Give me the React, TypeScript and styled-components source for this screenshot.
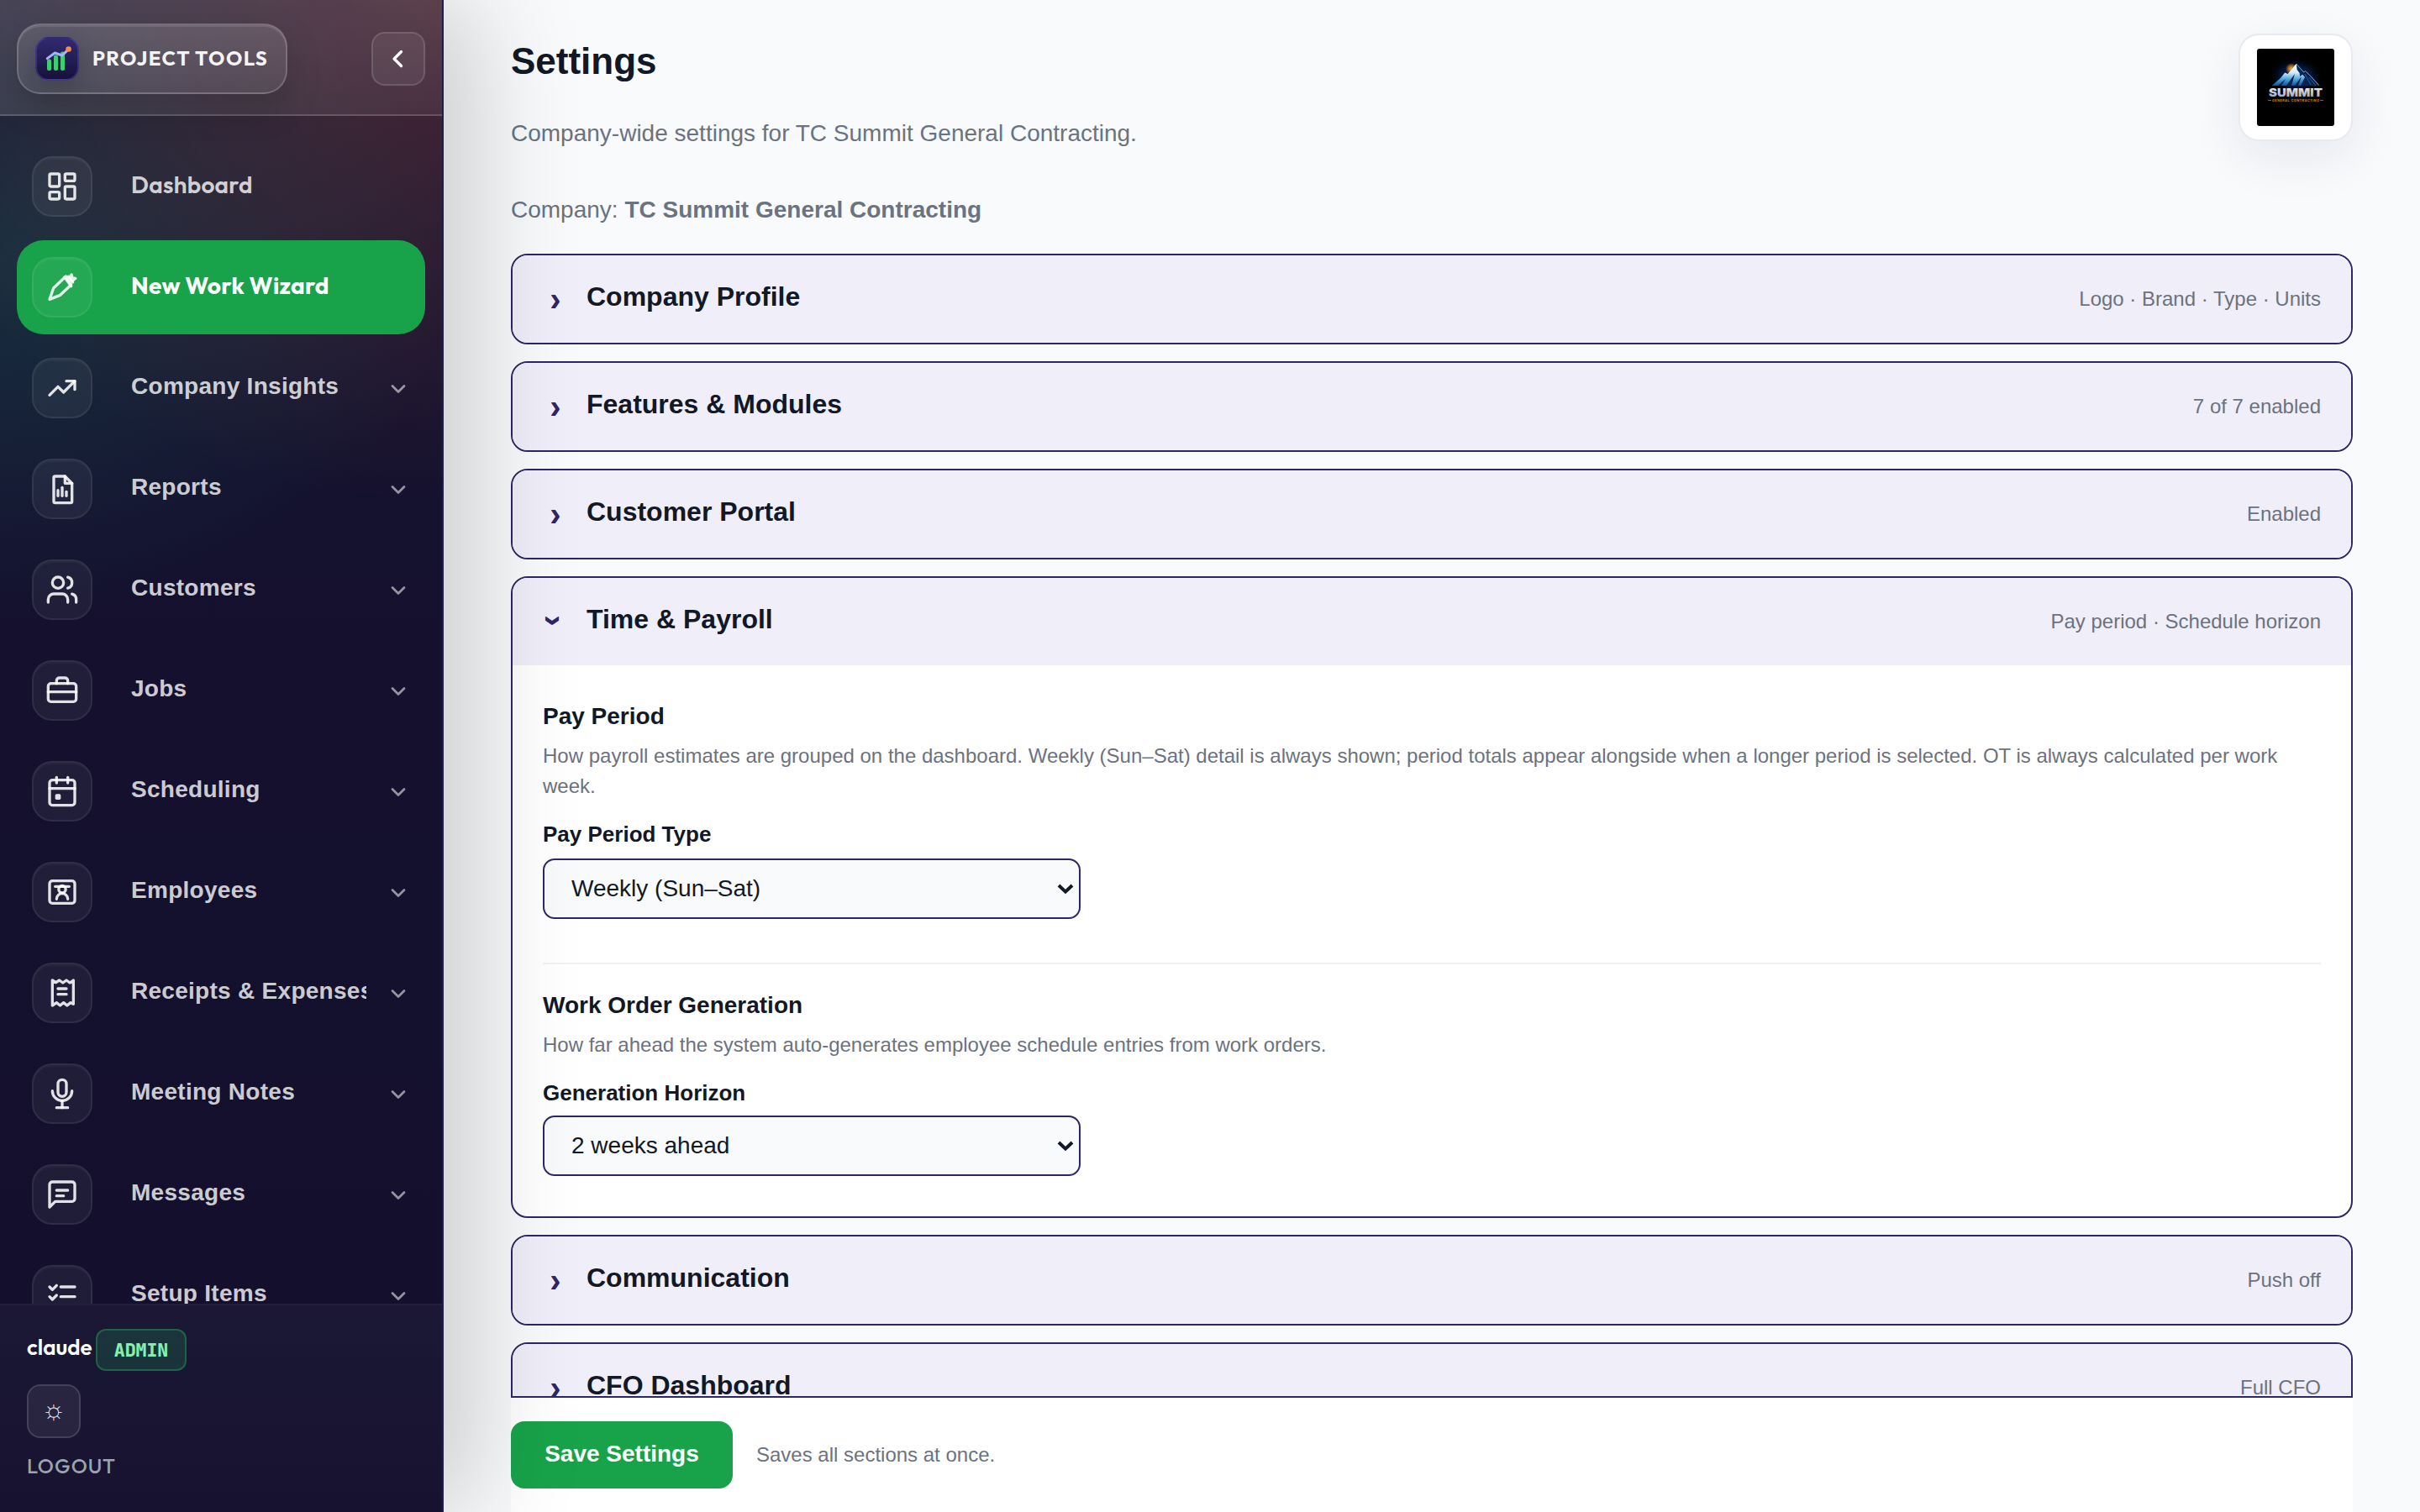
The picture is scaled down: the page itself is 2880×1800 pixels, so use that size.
import React from 'react';
import styled, { createGlobalStyle, css } from 'styled-components';

const SANS = '"Liberation Sans", Arial, sans-serif';
const DISPLAY = 'Outfit, Lato, "Liberation Sans", sans-serif';
const MONO = '"JetBrains Mono", "DejaVu Sans Mono", monospace';
const NAVY = '#2d2669';

const GlobalStyle = createGlobalStyle`
  * { box-sizing: border-box; }
  html, body { margin: 0; padding: 0; }
  body { background: #f9fafc; font-family: ${SANS}; color: #111827; overflow: hidden; }
  h1, h2, h3, p { margin: 0; }
  button { font: inherit; cursor: pointer; }
`;

const Shell = styled.div`
  display: flex;
  width: 2880px;
  height: 1800px;
  overflow: hidden;
  background: #f9fafc;
`;

/* ---------- Sidebar ---------- */

const Sidebar = styled.aside`
  position: relative;
  z-index: 2;
  flex: none;
  display: flex;
  flex-direction: column;
  width: 528px;
  height: 1800px;
  border-right: 2px solid #1f1d4a;
  background:
    radial-gradient(700px 600px at 528px 0, rgba(250, 122, 80, 0.22), rgba(250, 122, 80, 0) 100%),
    radial-gradient(540px 430px at 0 310px, rgba(45, 212, 160, 0.15), rgba(45, 212, 160, 0) 100%),
    linear-gradient(180deg, #15122f 0%, #130f2d 100%);
  box-shadow: 36px 0 120px rgba(0, 0, 0, 0.19);
`;

const SidebarHeader = styled.div`
  flex: none;
  display: flex;
  align-items: center;
  justify-content: space-between;
  height: 138px;
  padding: 0 20px;
  border-bottom: 2px solid rgba(255, 255, 255, 0.12);
  background:
    linear-gradient(90deg, rgba(255, 255, 255, 0.06), rgba(255, 255, 255, 0)),
    linear-gradient(180deg, rgba(255, 255, 255, 0.11), rgba(255, 255, 255, 0.06));
`;

const Brand = styled.div`
  display: flex;
  align-items: center;
  gap: 16px;
  width: 322px;
  height: 84px;
  margin-top: 4px;
  padding: 0 20px;
  border: 2px solid rgba(255, 255, 255, 0.18);
  border-radius: 28px;
  background: linear-gradient(180deg, rgba(255, 255, 255, 0.13), rgba(255, 255, 255, 0.08));
  box-shadow: 0 16px 44px rgba(0, 0, 0, 0.16), inset 0 2px 0 rgba(255, 255, 255, 0.1);
`;

const BrandMark = styled.span`
  flex: none;
  display: flex;
  width: 52px;
  height: 52px;
  border-radius: 16px;
  border: 2px solid rgba(99, 90, 200, 0.35);
  background: linear-gradient(180deg, #312a72, #16123a);
  box-shadow: 0 8px 24px rgba(0, 0, 0, 0.18);

  svg { margin: -2px; flex: none; }
`;

const BrandName = styled.span`
  margin-top: -2px;
  font: 700 24px/32px ${DISPLAY};
  letter-spacing: 1.4px;
  color: rgba(255, 255, 255, 0.94);
  white-space: nowrap;
`;

const SquareButton = styled.button<{ $top?: number }>`
  display: flex;
  align-items: center;
  justify-content: center;
  width: 64px;
  height: 64px;
  padding: 0;
  margin-top: ${p => p.$top ?? 0}px;
  border: 2px solid rgba(255, 255, 255, 0.13);
  border-radius: 16px;
  background: rgba(255, 255, 255, 0.07);
  color: #fff;
`;

const Nav = styled.nav`
  flex: 1;
  min-height: 0;
  overflow: hidden;
  display: flex;
  flex-direction: column;
  gap: 8px;
  padding: 28px 20px 0;
`;

const NavItem = styled.a<{ $active?: boolean }>`
  flex: none;
  display: flex;
  align-items: center;
  height: 112px;
  padding: 0 18px;
  border-radius: 32px;
  color: rgba(255, 255, 255, 0.8);
  ${p => p.$active && css`
    background: #18a34a;
    color: #fff;
  `}
`;

const IconTile = styled.span`
  flex: none;
  display: flex;
  align-items: center;
  justify-content: center;
  width: 72px;
  height: 72px;
  margin-right: 46px;
  border: 2px solid rgba(255, 255, 255, 0.07);
  border-radius: 24px;
  background: rgba(255, 255, 255, 0.055);
  box-shadow: inset 0 2px 0 rgba(255, 255, 255, 0.035);
  color: rgba(255, 255, 255, 0.87);
`;

const NavLabel = styled.span<{ $display?: boolean; $bold?: boolean }>`
  flex: 1;
  min-width: 0;
  overflow: hidden;
  white-space: nowrap;
  font: ${p => (p.$bold ? 700 : 600)} 28px/40px ${p => (p.$display ? DISPLAY : SANS)};
  letter-spacing: 0.28px;
  margin-top: -4px;
`;

const NavChevron = styled.span`
  flex: none;
  display: flex;
  margin: 2px 0 0 24px;
  color: rgba(255, 255, 255, 0.55);
`;

const SidebarFooter = styled.div`
  flex: none;
  display: flex;
  flex-direction: column;
  align-items: flex-start;
  height: 248px;
  padding: 28px 32px 0;
  border-top: 2px solid rgba(255, 255, 255, 0.06);
  background: linear-gradient(180deg, rgba(255, 255, 255, 0.035), rgba(255, 255, 255, 0.01));
`;

const UserRow = styled.div`
  display: flex;
  align-items: center;
  gap: 5px;
  height: 50px;
`;

const UserName = styled.span`
  width: 77px;
  font: 600 26px/32px ${DISPLAY};
  color: #fff;
  margin-top: -7px;
`;

const RoleBadge = styled.span`
  display: flex;
  align-items: center;
  justify-content: center;
  width: 108px;
  height: 50px;
  border: 2px solid rgba(34, 197, 94, 0.34);
  border-radius: 12px;
  background: rgba(34, 197, 94, 0.17);
  font: 800 21.5px/28px ${MONO};
  color: #86efac;
`;

const SunGlyph = styled.span`
  margin-top: -5px;
  font: 400 32px/28px "Liberation Sans", "DejaVu Sans", sans-serif;
  color: rgba(255, 255, 255, 0.85);
`;

const Logout = styled.a`
  margin-top: 17px;
  font: 500 24px/32px ${DISPLAY};
  letter-spacing: 0.96px;
  color: #9ca3af;
`;

/* ---------- Main ---------- */

const Main = styled.main`
  flex: 1;
  min-width: 0;
  display: flex;
  flex-direction: column;
  height: 1800px;
`;

const Scroll = styled.div`
  flex: 1;
  min-height: 0;
  overflow: hidden;
  padding: 0 80px;
`;

const PageHeader = styled.header`
  display: flex;
  justify-content: space-between;
  align-items: flex-start;
  padding-top: 40px;
  margin-bottom: 31px;
`;

const HeaderText = styled.div`
  display: flex;
  flex-direction: column;
  padding-top: 7px;
`;

const Title = styled.h1`
  font: 700 44px/52px ${SANS};
`;

const Lead = styled.p<{ $gap: number }>`
  margin-top: ${p => p.$gap}px;
  font: 400 28px/42px ${SANS};
  color: #6b7280;
`;

const LogoCard = styled.div`
  display: flex;
  align-items: center;
  justify-content: center;
  width: 136px;
  height: 128px;
  border: 2px solid #eae9f0;
  border-radius: 24px;
  background: #fff;
  box-shadow: 0 20px 60px rgba(30, 20, 60, 0.08);
`;

const Stack = styled.div`
  display: flex;
  flex-direction: column;
  gap: 20px;
`;

const Card = styled.section`
  flex: none;
  border: 2px solid ${NAVY};
  border-radius: 20px;
  background: #fff;
  overflow: hidden;
`;

const CardHeader = styled.div`
  display: flex;
  align-items: baseline;
  height: 104px;
  padding: 25px 36px 0;
  background: #f0eef8;
`;

const Caret = styled.span<{ $open?: boolean }>`
  align-self: flex-start;
  flex: none;
  width: 28px;
  height: 52px;
  margin: 0 23px 0 1px;
  font: 700 40px/55px ${SANS};
  text-align: center;
  color: ${NAVY};
  transform: ${p => (p.$open ? 'rotate(90deg)' : 'none')};
`;

const CardTitle = styled.h2`
  flex: 1;
  font: 700 32px/48px ${SANS};
`;

const CardMeta = styled.span`
  font: 400 24px/36px ${SANS};
  color: #6b7280;
`;

const CardBody = styled.div`
  padding: 40px 36px 48px;
`;

const SectionTitle = styled.h3`
  font: 700 28px/42px ${SANS};
`;

const Hint = styled.p`
  margin-top: 8px;
  font: 400 24px/36px ${SANS};
  color: #6b7280;
`;

const FieldLabel = styled.label`
  display: block;
  margin-top: 21px;
  font: 700 26px/36px ${SANS};
`;

const SelectWrap = styled.div<{ $gap: number }>`
  position: relative;
  width: 640px;
  height: 72px;
  margin-top: ${p => p.$gap}px;

  svg {
    position: absolute;
    right: 7px;
    top: 26px;
    pointer-events: none;
  }
`;

const Select = styled.select`
  appearance: none;
  display: block;
  width: 100%;
  height: 100%;
  padding: 0 32px;
  border: 2px solid ${NAVY};
  border-radius: 14px;
  background: #f9fafc;
  font: 400 28px/36px ${SANS};
  color: #111827;
`;

const Divider = styled.hr`
  height: 2px;
  margin: 52px 0 28px;
  border: 0;
  background: #f1f2f4;
`;

const SaveBar = styled.footer`
  flex: none;
  display: flex;
  align-items: flex-start;
  height: 138px;
  margin: 0 80px;
  padding-top: 28px;
  border-top: 2px solid ${NAVY};
  background: #fff;
`;

const SaveButton = styled.button`
  width: 264px;
  height: 80px;
  border: 0;
  border-radius: 16px;
  background: #18a34a;
  color: #fff;
  padding: 0 0 3px;
  font: 700 28px/36px ${SANS};
`;

const SaveNote = styled.span`
  margin-left: 28px;
  line-height: 80px;
  font-size: 24px;
  color: #6b7280;
`;

/* ---------- Drawings ---------- */

const Glyph = ({ size = 40, width = 2, children }: { size?: number; width?: number; children: React.ReactNode }) => (
  <svg width={size} height={size} viewBox="0 0 24 24" fill="none" stroke="currentColor" strokeWidth={width} strokeLinecap="round" strokeLinejoin="round">
    {children}
  </svg>
);

const icons = {
  dashboard: <><rect x="3" y="3" width="7" height="9" rx="1" /><rect x="14" y="3" width="7" height="5" rx="1" /><rect x="14" y="12" width="7" height="9" rx="1" /><rect x="3" y="16" width="7" height="5" rx="1" /></>,
  wizard: <><path d="M3 20.6l2.8-8 8.8-8.4 3.800 6-7.800 7.400z" /><path d="M13.800 4.800l4.600 6.400" /><path d="M16.400 4.400l3.200 4" /><path d="M18.700 3l.5 2.300 2.300.4-2.200 1.600-2-2.200z" /></>,
  insights: <><path d="M3 17l6-6 4 4 8-8" /><path d="M15 7h6v6" /></>,
  reports: <><path d="M14 3H7a1 1 0 0 0-1 1v17a1 1 0 0 0 1 1h11a1 1 0 0 0 1-1V8z" /><path d="M14 3v5h5" /><path d="M9 13v4" /><path d="M12 11v6" /><path d="M15 14v3" /></>,
  customers: <><path d="M16 21v-2a4 4 0 0 0-4-4H6a4 4 0 0 0-4 4v2" /><circle cx="9" cy="7" r="4" /><path d="M22 21v-2a4 4 0 0 0-3-3.87" /><path d="M16 3.13a4 4 0 0 1 0 7.75" /></>,
  jobs: <><rect x="2" y="7" width="20" height="13" rx="2" /><path d="M8 7V5a2 2 0 0 1 2-2h4a2 2 0 0 1 2 2v2" /><path d="M2 13h20" /></>,
  scheduling: <><rect x="3" y="4" width="18" height="18" rx="2" /><path d="M3 10h18" /><path d="M8 2v4" /><path d="M16 2v4" /><rect x="8" y="15" width="2" height="2" /></>,
  employees: <><rect x="3" y="4" width="18" height="16" rx="2" /><circle cx="12" cy="10" r="2.5" /><path d="M8 17a4 4 0 0 1 8 0" /><path d="M7 8h10" /></>,
  receipts: <><path d="M5 3v18l3-2 2.5 2 2.5-2 2.5 2 2.5-2 2 1V3l-2.5 1.8L15 3l-2.5 1.8L10 3 7.5 4.6z" /><path d="M9 9h6" /><path d="M9 13h6" /></>,
  meeting: <><rect x="9" y="2" width="6" height="12" rx="3" /><path d="M5 10a7 7 0 0 0 14 0" /><path d="M12 17v5" /><path d="M8 22h8" /></>,
  messages: <><path d="M21 15a2 2 0 0 1-2 2H7l-4 4V5a2 2 0 0 1 2-2h14a2 2 0 0 1 2 2z" /><path d="M8 9h8" /><path d="M8 13h5" /></>,
  setup: <><path d="M3 6l2 2 3-3" /><path d="M11 6h10" /><path d="M3 13l2 2 3-3" /><path d="M11 13h10" /><path d="M3 20l2 2 3-3" /><path d="M11 20h10" /></>,
};

const BrandChart = () => (
  <svg width="52" height="52" viewBox="0 0 52 52" fill="none">
    <rect x="14" y="26.5" width="5" height="13.5" rx="2" fill="#3ccf70" />
    <rect x="22" y="21.5" width="5" height="18.5" rx="2" fill="#3ccf70" />
    <rect x="30" y="17.5" width="5" height="22.5" rx="2" fill="#3ccf70" />
    <path d="M14.2 25.6L23.3 19l8.7 3 7.6-7.4" stroke="#a9b0fb" strokeWidth="3" strokeLinecap="round" strokeLinejoin="round" />
    <circle cx="39.6" cy="14.5" r="3.3" fill="#fb8a4b" />
  </svg>
);

const SummitLogo = () => (
  <svg width="92" height="92" viewBox="0 0 92 92">
    <defs>
      <radialGradient id="glow" cx="50%" cy="50%" r="50%">
        <stop offset="0" stopColor="#0b429a" stopOpacity="0.95" />
        <stop offset="0.6" stopColor="#041f52" stopOpacity="0.6" />
        <stop offset="1" stopColor="#000" stopOpacity="0" />
      </radialGradient>
      <radialGradient id="sun" cx="50%" cy="50%" r="50%">
        <stop offset="0" stopColor="#ffc04a" />
        <stop offset="0.5" stopColor="#f08a12" stopOpacity="0.7" />
        <stop offset="1" stopColor="#f08a12" stopOpacity="0" />
      </radialGradient>
      <linearGradient id="ice" x1="0" y1="0" x2="0" y2="1">
        <stop offset="0" stopColor="#fff" />
        <stop offset="0.4" stopColor="#d5ecf8" />
        <stop offset="0.7" stopColor="#4ea4dc" />
        <stop offset="1" stopColor="#0f4f96" />
      </linearGradient>
      <linearGradient id="steel" x1="0" y1="0" x2="0" y2="1">
        <stop offset="0" stopColor="#f3f6fb" />
        <stop offset="1" stopColor="#8d9bb5" />
      </linearGradient>
    </defs>
    <rect width="92" height="92" rx="3" fill="#000" />
    <ellipse cx="46" cy="33" rx="32" ry="23" fill="url(#glow)" />
    <ellipse cx="46" cy="60" rx="26" ry="9" fill="url(#glow)" opacity="0.35" />
    <circle cx="41" cy="24" r="7" fill="url(#sun)" />
    <path d="M46.700 18L57 29l3-2 15 17H17l12-10 4-5 3 1z" fill="#06234f" />
    <path d="M46.700 18l-7 8-3 4-3.500-1.500L28 35l-10 9h7l9-8-5 8h6l10-14-4 14h4l8-11-4 11h3l5-10-5-6-1.500-3z" fill="url(#ice)" />
    <path d="M46.700 18l1 7 3 4 .5 4 4-3z" fill="#072a5e" />
    <path d="M46.700 18l9 10 2-1.500 6 6 10 11" stroke="#bcdcf2" strokeWidth="0.7" fill="none" />
    <path d="M57 30l7 13M62 34l8 10" stroke="#1a68b4" strokeWidth="0.9" />
    <text x="14" y="57.300" fontFamily="Inter, sans-serif" fontWeight="900" fontSize="13.300" textLength="64" lengthAdjust="spacingAndGlyphs" fill="url(#steel)">SUMMIT</text>
    <text x="18" y="63" fontFamily="Inter, sans-serif" fontWeight="700" fontSize="3.700" textLength="56" lengthAdjust="spacing" fill="#c98a1a">GENERAL CONTRACTING</text>
    <path d="M13 61.500h4M75 61.500h4" stroke="#b87a14" strokeWidth="0.8" />
  </svg>
);

const SelectArrow = () => (
  <svg width="22" height="20" viewBox="0 0 22 20" fill="none" stroke="#111827" strokeWidth="4">
    <path d="M3 6l8 7.600L19 6" />
  </svg>
);

/* ---------- Data ---------- */

type NavEntry = { label: string; icon: keyof typeof icons; link?: boolean; active?: boolean };

const navEntries: NavEntry[] = [
  { label: 'Dashboard', icon: 'dashboard', link: true },
  { label: 'New Work Wizard', icon: 'wizard', link: true, active: true },
  { label: 'Company Insights', icon: 'insights' },
  { label: 'Reports', icon: 'reports' },
  { label: 'Customers', icon: 'customers' },
  { label: 'Jobs', icon: 'jobs' },
  { label: 'Scheduling', icon: 'scheduling' },
  { label: 'Employees', icon: 'employees' },
  { label: 'Receipts & Expenses', icon: 'receipts' },
  { label: 'Meeting Notes', icon: 'meeting' },
  { label: 'Messages', icon: 'messages' },
  { label: 'Setup Items', icon: 'setup' },
];

const Panel = ({ title, meta, children }: { title: string; meta: string; children?: React.ReactNode }) => (
  <Card>
    <CardHeader>
      <Caret $open={!!children}>›</Caret>
      <CardTitle>{title}</CardTitle>
      <CardMeta>{meta}</CardMeta>
    </CardHeader>
    {children && <CardBody>{children}</CardBody>}
  </Card>
);

const Field = ({ label, value, gap }: { label: string; value: string; gap: number }) => (
  <>
    <FieldLabel>{label}</FieldLabel>
    <SelectWrap $gap={gap}>
      <Select defaultValue={value}><option>{value}</option></Select>
      <SelectArrow />
    </SelectWrap>
  </>
);

export default function App() {
  return (
    <Shell>
      <GlobalStyle />
      <Sidebar>
        <SidebarHeader>
          <Brand>
            <BrandMark><BrandChart /></BrandMark>
            <BrandName>PROJECT TOOLS</BrandName>
          </Brand>
          <SquareButton $top={4}>
            <Glyph size={34} width={2.3}><path d="M14.5 18l-6-6 6-6" /></Glyph>
          </SquareButton>
        </SidebarHeader>
        <Nav>
          {navEntries.map(item => (
            <NavItem key={item.label} $active={item.active}>
              <IconTile><Glyph>{icons[item.icon]}</Glyph></IconTile>
              <NavLabel $display={item.link} $bold={item.active}>{item.label}</NavLabel>
              {!item.link && (
                <NavChevron><Glyph size={28} width={2.4}><path d="M6 9l6 6 6-6" /></Glyph></NavChevron>
              )}
            </NavItem>
          ))}
        </Nav>
        <SidebarFooter>
          <UserRow>
            <UserName>claude</UserName>
            <RoleBadge>ADMIN</RoleBadge>
          </UserRow>
          <SquareButton $top={16}><SunGlyph>☼</SunGlyph></SquareButton>
          <Logout>LOGOUT</Logout>
        </SidebarFooter>
      </Sidebar>
      <Main>
        <Scroll>
          <PageHeader>
            <HeaderText>
              <Title>Settings</Title>
              <Lead $gap={39}>Company-wide settings for TC Summit General Contracting.</Lead>
              <Lead $gap={49}>Company: <strong>TC Summit General Contracting</strong></Lead>
            </HeaderText>
            <LogoCard><SummitLogo /></LogoCard>
          </PageHeader>
          <Stack>
            <Panel title="Company Profile" meta="Logo · Brand · Type · Units" />
            <Panel title="Features & Modules" meta="7 of 7 enabled" />
            <Panel title="Customer Portal" meta="Enabled" />
            <Panel title="Time & Payroll" meta="Pay period · Schedule horizon">
              <SectionTitle>Pay Period</SectionTitle>
              <Hint>
                How payroll estimates are grouped on the dashboard. Weekly (Sun–Sat) detail is always shown; period totals
                appear alongside when a longer period is selected. OT is always calculated per work week.
              </Hint>
              <Field label="Pay Period Type" value="Weekly (Sun–Sat)" gap={11} />
              <Divider />
              <SectionTitle>Work Order Generation</SectionTitle>
              <Hint>How far ahead the system auto-generates employee schedule entries from work orders.</Hint>
              <Field label="Generation Horizon" value="2 weeks ahead" gap={9} />
            </Panel>
            <Panel title="Communication" meta="Push off" />
            <Panel title="CFO Dashboard" meta="Full CFO" />
          </Stack>
        </Scroll>
        <SaveBar>
          <SaveButton>Save Settings</SaveButton>
          <SaveNote>Saves all sections at once.</SaveNote>
        </SaveBar>
      </Main>
    </Shell>
  );
}
